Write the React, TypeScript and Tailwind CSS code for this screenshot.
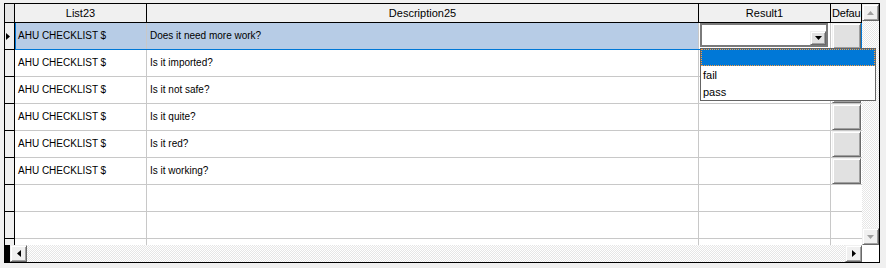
import React from "react";

const rows = [
  "Does it need more work?",
  "Is it imported?",
  "Is it not safe?",
  "Is it quite?",
  "Is it red?",
  "Is it working?",
  "",
  "",
  "",
];

const btn3d =
  "border border-t-[#f0f0f0] border-l-[#f0f0f0] border-r-[#696969] border-b-[#696969] shadow-[inset_1px_1px_0_#ffffff,inset_-1px_-1px_0_#a0a0a0]";

function Tri({ dir, color }: { dir: "up" | "down" | "left" | "right"; color: string }) {
  if (dir === "up")
    return (
      <svg width="7" height="4" viewBox="0 0 7 4">
        <polygon points="0,4 7,4 3.5,0" fill={color} />
      </svg>
    );
  if (dir === "down")
    return (
      <svg width="7" height="4" viewBox="0 0 7 4">
        <polygon points="0,0 7,0 3.5,4" fill={color} />
      </svg>
    );
  if (dir === "left")
    return (
      <svg width="4" height="7" viewBox="0 0 4 7">
        <polygon points="4,0 4,7 0,3.5" fill={color} />
      </svg>
    );
  return (
    <svg width="4" height="7" viewBox="0 0 4 7">
      <polygon points="0,0 0,7 4,3.5" fill={color} />
    </svg>
  );
}

export default function App() {
  return (
    <div className="relative w-[886px] h-[268px] bg-[#f0f0f0] pt-[3px] pl-[4px] overflow-hidden font-['Liberation_Sans',Arial,sans-serif] text-black">
      <div className="w-[876px] h-[260px] border border-black flex flex-col bg-white">
        <div className="flex h-[241px] shrink-0">
          <div className="w-[857px] flex flex-col overflow-hidden">
            {/* header */}
            <div className="flex h-[19px] shrink-0 bg-[#f0f0f0] border-b border-black text-[11px] leading-none">
              <div className="w-[10px] shrink-0 border-r border-black bg-[#e6e6e6]" />
              <div className="w-[132px] shrink-0 border-r border-black flex items-center justify-center">List23</div>
              <div className="w-[552px] shrink-0 border-r border-black flex items-center justify-center">Description25</div>
              <div className="w-[132px] shrink-0 border-r border-black flex items-center justify-center">Result1</div>
              <div className="w-[31px] shrink-0 border-r border-black whitespace-nowrap flex items-center pl-[1px] tracking-[-0.2px]">Defau</div>
            </div>
            {rows.map((desc, i) => {
              const sel = i === 0;
              const hasData = desc !== "";
              return (
                <div key={i} className="relative flex h-[27px] shrink-0 text-[10px] leading-none">
                  <div className="w-[10px] shrink-0 bg-[#f0f0f0] border-r border-b border-black flex items-center pl-[1px]">
                    {sel && <Tri dir="right" color="#000" />}
                  </div>
                  <div
                    className={`w-[132px] shrink-0 border-r border-b border-[#c8c8c8] flex items-center pl-[3px] whitespace-nowrap ${
                      sel ? "bg-[#b7cce6]" : ""
                    }`}
                  >
                    {hasData ? "AHU CHECKLIST $" : ""}
                  </div>
                  <div
                    className={`w-[552px] shrink-0 border-r border-b border-[#c8c8c8] flex items-center pl-[3px] whitespace-nowrap ${
                      sel ? "bg-[#b7cce6]" : ""
                    }`}
                  >
                    {desc}
                  </div>
                  <div className="w-[132px] shrink-0 border-r border-b border-[#c8c8c8]">
                    {sel && (
                      <div className="relative ml-[1px] w-[128px] h-[24px] border-2 border-[#7a7a7a] bg-white">
                        <div className={`absolute right-0 bottom-0 w-[16px] h-[14px] bg-[#e1e1e1] flex items-center justify-center ${btn3d}`}>
                          <Tri dir="down" color="#000" />
                        </div>
                      </div>
                    )}
                  </div>
                  <div className="w-[31px] shrink-0 border-b border-[#c8c8c8] pl-[1px]">
                    {hasData && <div className={`w-[29px] h-full bg-[#e1e1e1] ${btn3d}`} />}
                  </div>
                  {sel && (
                    <div className="absolute left-[10px] top-0 right-0 h-[27px] border-l border-r border-b border-[#0078d7] pointer-events-none" />
                  )}
                </div>
              );
            })}
          </div>
          {/* vertical scrollbar */}
          <div className="w-[17px] shrink-0 flex flex-col">
            <div className={`h-[17px] shrink-0 bg-[#f0f0f0] flex items-center justify-center ${btn3d}`}>
              <Tri dir="up" color="#a0a0a0" />
            </div>
            <div className="flex-1 bg-[repeating-conic-gradient(#e6e6e6_0%_25%,#ffffff_0%_50%)] bg-[length:2px_2px]" />
            <div className={`h-[17px] shrink-0 bg-[#f0f0f0] flex items-center justify-center ${btn3d}`}>
              <Tri dir="down" color="#a0a0a0" />
            </div>
          </div>
        </div>
        {/* horizontal scrollbar */}
        <div className="flex h-[17px] shrink-0">
          <div className="w-[5px] shrink-0 bg-black" />
          <div className={`w-[17px] shrink-0 bg-[#f0f0f0] flex items-center justify-center ${btn3d}`}>
            <Tri dir="left" color="#000" />
          </div>
          <div className="flex-1 bg-[repeating-conic-gradient(#e6e6e6_0%_25%,#ffffff_0%_50%)] bg-[length:2px_2px]" />
          <div className={`w-[17px] shrink-0 bg-[#f0f0f0] flex items-center justify-center ${btn3d}`}>
            <Tri dir="right" color="#000" />
          </div>
          <div className="w-[17px] shrink-0 bg-white" />
        </div>
      </div>
      {/* dropdown list */}
      <div className="absolute left-[700px] top-[48px] w-[176px] h-[53px] border border-[#646464] bg-white text-[11px] leading-none">
        <div className="h-[17px] bg-[#0078d7] border border-dotted border-[#ff9d3b]" />
        <div className="h-[17px] flex items-center pl-[2px] pt-[2px]">fail</div>
        <div className="h-[17px] flex items-center pl-[2px] pt-[2px]">pass</div>
      </div>
    </div>
  );
}
